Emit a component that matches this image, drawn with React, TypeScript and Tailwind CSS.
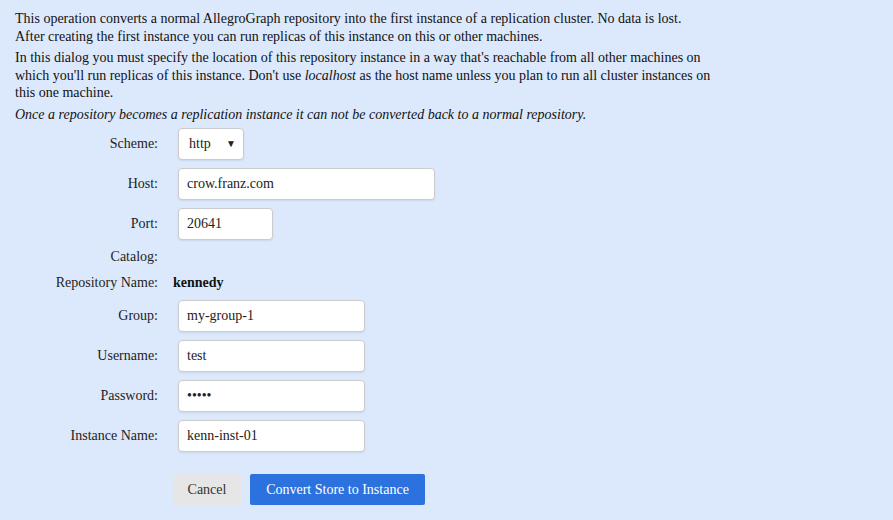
const serif = { fontFamily: '"Liberation Serif", "Times New Roman", serif' };

interface FieldProps {
  label: string;
  value: string;
  width: string;
  type?: string;
}

function Label({ children }: { children: React.ReactNode }) {
  return <div className="text-right text-[14px] text-[#222] self-center">{children}</div>;
}

function Field({ label, value, width, type = 'text' }: FieldProps) {
  return (
    <>
      <Label>{label}</Label>
      <div className="pl-[5px]">
        <input
          type={type}
          defaultValue={value}
          style={serif}
          className={`${width} h-[32px] rounded-[4px] border border-[#ccc] bg-white px-2 text-[14px] text-[#222] shadow-[0_1px_2px_rgba(0,0,0,0.08)] outline-none`}
        />
      </div>
    </>
  );
}

export default function App() {
  return (
    <div style={serif} className="min-h-[520px] w-[893px] bg-[#dce9fc] pt-[10px] text-[14px] leading-[17.5px] text-[#111]">
      <div className="w-[730px] pl-[15px]">
        <p>
          This operation converts a normal AllegroGraph repository into the first instance of a replication cluster. No data is lost.
          <br />
          After creating the first instance you can run replicas of this instance on this or other machines.
        </p>
        <p className="mt-[4px]">
          In this dialog you must specify the location of this repository instance in a way that's reachable from all other machines on
          which you'll run replicas of this instance. Don't use <i>localhost</i> as the host name unless you plan to run all cluster instances on
          this one machine.
        </p>
        <p className="mt-[4px] italic">
          Once a repository becomes a replication instance it can not be converted back to a normal repository.
        </p>
      </div>

      <div className="mt-[5px] grid grid-cols-[158px_auto] gap-x-[15px] gap-y-[8px]">
        <Label>Scheme:</Label>
        <div className="pl-[5px]">
          <div className="flex h-[32px] w-[66px] items-center justify-between rounded-[4px] border border-[#ccc] bg-white pl-[10px] pr-[7px] text-[14px] text-[#222] shadow-[0_1px_2px_rgba(0,0,0,0.08)]">
            <span>http</span>
            <span className="text-[10px]">▼</span>
          </div>
        </div>
        <Field label="Host:" value="crow.franz.com" width="w-[257px]" />
        <Field label="Port:" value="20641" width="w-[95px]" />
        <div className="h-[18px] text-right text-[14px] text-[#222]">Catalog:</div>
        <div />
        <div className="h-[18px] text-right text-[14px] text-[#222]">Repository Name:</div>
        <div className="h-[18px] font-bold">kennedy</div>
        <Field label="Group:" value="my-group-1" width="w-[187px]" />
        <Field label="Username:" value="test" width="w-[187px]" />
        <Field label="Password:" value="12345" type="password" width="w-[187px]" />
        <Field label="Instance Name:" value="kenn-inst-01" width="w-[187px]" />
        <div />
        <div className="mt-[14px] flex gap-[9px]">
          <button style={serif} className="h-[31px] w-[68px] rounded-[2px] bg-[#e6e6e6] text-[14px] text-[#333]">
            Cancel
          </button>
          <button style={serif} className="h-[31px] w-[175px] rounded-[2px] bg-[#2b72de] text-[14px] text-white">
            Convert Store to Instance
          </button>
        </div>
      </div>
    </div>
  );
}
